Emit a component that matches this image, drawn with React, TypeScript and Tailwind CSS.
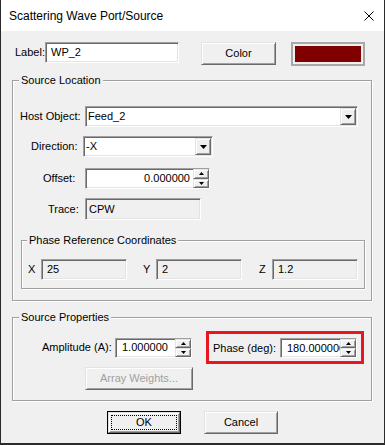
import React from "react";

const sunken =
  "border border-t-[#a0a0a0] border-l-[#a0a0a0] border-b-white border-r-white shadow-[inset_1px_1px_0_#696969,inset_-1px_-1px_0_#e3e3e3]";
const raised =
  "border border-t-[#e3e3e3] border-l-[#e3e3e3] border-b-[#696969] border-r-[#696969] shadow-[inset_1px_1px_0_#ffffff,inset_-1px_-1px_0_#a0a0a0] bg-[#f0f0f0]";

function DownTri() {
  return (
    <svg width="7" height="4" viewBox="0 0 7 4">
      <polygon points="0,0 7,0 3.5,4" fill="#000" />
    </svg>
  );
}

function Spin() {
  return (
    <div className="flex flex-col w-[16px] h-full shrink-0">
      <div className={`${raised} h-1/2 flex items-center justify-center`}>
        <svg width="5" height="3" viewBox="0 0 5 3">
          <polygon points="2.5,0 5,3 0,3" fill="#000" />
        </svg>
      </div>
      <div className={`${raised} h-1/2 flex items-center justify-center`}>
        <svg width="5" height="3" viewBox="0 0 5 3">
          <polygon points="0,0 5,0 2.5,3" fill="#000" />
        </svg>
      </div>
    </div>
  );
}

function Combo({ value, w }: { value: string; w: string }) {
  return (
    <div className={`${sunken} ${w} h-[21px] bg-white flex p-[1px]`}>
      <div className="flex-1 flex items-center pl-[1px] whitespace-nowrap">{value}</div>
      <div className={`${raised} w-[16px] h-full flex items-center justify-center`}>
        <DownTri />
      </div>
    </div>
  );
}

export default function App() {
  return (
    <div className="w-[385px] h-[445px] flex flex-col bg-[#f0f0f0] border-x border-b-2 border-[#2b2b2b] text-[11px] leading-[13px] text-black font-['Liberation_Sans',Arial,sans-serif] overflow-hidden">
      {/* Title bar */}
      <div className="h-[31px] shrink-0 bg-white flex items-center justify-between pl-[8px] pr-[10px]">
        <span className="text-[12px] leading-[16px]">Scattering Wave Port/Source</span>
        <svg width="10" height="10" viewBox="0 0 10 10">
          <path d="M0.5 0.5 L9.5 9.5 M9.5 0.5 L0.5 9.5" stroke="#000" strokeWidth="1" />
        </svg>
      </div>

      <div className="flex flex-col pl-[11px] pt-[11px]">
        {/* Label row */}
        <div className="flex items-start pl-[3px]">
          <div className="w-[30px] h-[21px] flex items-center">Label:</div>
          <div className={`${sunken} w-[134px] h-[21px] bg-white flex items-center pl-[5px]`}>WP_2</div>
          <div className={`${raised} ml-[22px] w-[75px] h-[23px] flex items-center justify-center`}>Color</div>
          <div className="ml-[15px] w-[74px] h-[24px] border-2 border-[#a8a8a8] p-[2px]">
            <div className="w-full h-full bg-[#800000]" />
          </div>
        </div>

        {/* Source Location */}
        <div className="relative mt-[14px] w-[360px] h-[221px] border border-[#a0a0a0] shadow-[inset_1px_1px_0_#ffffff,1px_1px_0_#ffffff]">
          <span className="absolute -top-[7px] left-[6px] px-[2px] bg-[#f0f0f0] leading-[13px]">Source Location</span>
          <div className="flex flex-col pt-[25px]">
            <div className="flex items-center pl-[7px]">
              <div className="w-[65px]">Host Object:</div>
              <Combo value="Feed_2" w="w-[273px]" />
            </div>
            <div className="flex items-center pl-[18px] mt-[9px]">
              <div className="w-[52px]">Direction:</div>
              <Combo value="-X" w="w-[130px]" />
            </div>
            <div className="flex items-center pl-[30px] mt-[11px]">
              <div className="w-[42px]">Offset:</div>
              <div className={`${sunken} w-[125px] h-[21px] bg-white flex`}>
                <div className="flex-1 flex items-center justify-end pr-[3px]">0.000000</div>
                <Spin />
              </div>
            </div>
            <div className="flex items-center pl-[35px] mt-[9px]">
              <div className="w-[37px]">Trace:</div>
              <div className={`${sunken} w-[116px] h-[22px] flex items-center pl-[3px]`}>CPW</div>
            </div>

            {/* Phase Reference Coordinates */}
            <div className="relative ml-[8px] mt-[20px] w-[344px] h-[49px] border border-[#a0a0a0] shadow-[inset_1px_1px_0_#ffffff,1px_1px_0_#ffffff]">
              <span className="absolute -top-[7px] left-[5px] px-[2px] bg-[#f0f0f0] leading-[13px]">Phase Reference Coordinates</span>
              <div className="flex items-center pt-[18px] pl-[6px]">
                <div className="w-[13px]">X</div>
                <div className={`${sunken} w-[86px] h-[21px] flex items-center pl-[5px]`}>25</div>
                <div className="w-[13px] ml-[16px]">Y</div>
                <div className={`${sunken} w-[86px] h-[21px] flex items-center pl-[5px]`}>2</div>
                <div className="w-[13px] ml-[17px]">Z</div>
                <div className={`${sunken} w-[86px] h-[21px] flex items-center pl-[5px]`}>1.2</div>
              </div>
            </div>
          </div>
        </div>

        {/* Source Properties */}
        <div className="relative mt-[16px] w-[360px] h-[84px] border border-[#a0a0a0] shadow-[inset_1px_1px_0_#ffffff,1px_1px_0_#ffffff]">
          <span className="absolute -top-[7px] left-[6px] px-[2px] bg-[#f0f0f0] leading-[13px]">Source Properties</span>
          <div className="flex flex-col pt-[13px]">
            <div className="flex items-center pl-[29px]">
              <div className="w-[73px]">Amplitude (A):</div>
              <div className={`${sunken} w-[77px] h-[20px] bg-white flex`}>
                <div className="flex-1 flex items-center pl-[6px]">1.000000</div>
                <Spin />
              </div>
              <div className="ml-[14px] border-[3px] border-[#e8161f] pt-[4px] pb-[3px] px-[4px] flex items-center">
                <div className="w-[67px]">Phase (deg):</div>
                <div className={`${sunken} w-[77px] h-[20px] bg-white flex`}>
                  <div className="flex-1 flex items-center pl-[6px] overflow-hidden whitespace-nowrap">180.000000</div>
                  <Spin />
                </div>
              </div>
            </div>
            <div className={`${raised} mt-[3px] ml-[72px] w-[108px] h-[23px] flex items-center justify-center text-[#a0a0a0]`}>
              Array Weights...
            </div>
          </div>
        </div>

        {/* Buttons */}
        <div className="flex mt-[10px] ml-[95px]">
          <div className="w-[74px] h-[23px] border border-black">
            <div className={`${raised} w-full h-full p-[2px]`}>
              <div className="w-full h-full border border-dotted border-black flex items-center justify-center">OK</div>
            </div>
          </div>
          <div className={`${raised} ml-[23px] w-[74px] h-[23px] flex items-center justify-center`}>Cancel</div>
        </div>
      </div>
    </div>
  );
}
